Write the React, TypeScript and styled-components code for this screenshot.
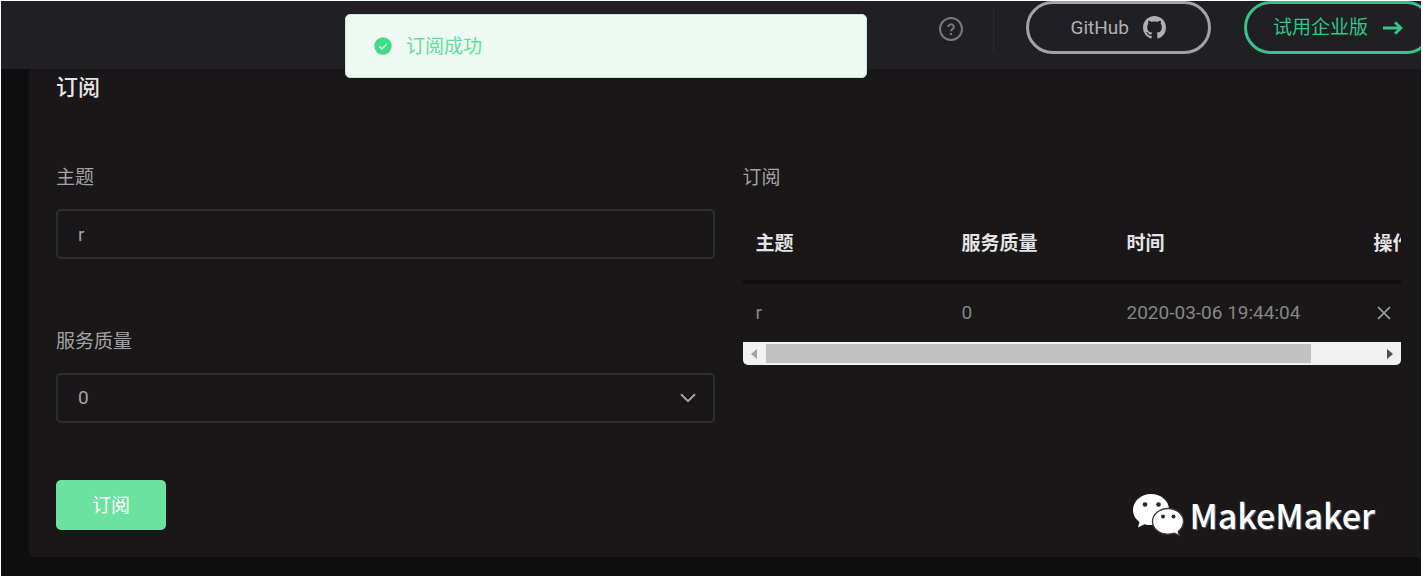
import React from "react";
import styled, { createGlobalStyle } from "styled-components";

const colors = {
  page: "#0e0e0e",
  header: "#201f24",
  card: "#1a1718",
  border: "#2e2c33",
  text: "#a2a2a5",
  muted: "#868587",
  strong: "#e4e4e6",
  green: "#34c388",
};

const GlobalStyle = createGlobalStyle`
  *, *::before, *::after { box-sizing: border-box; }
  html { background: #fff; }
  body {
    margin: 0;
    background: #fff;
    font-family: Roboto, "Noto Sans CJK SC", sans-serif;
    font-size: 19px;
    line-height: 28px;
    color: ${colors.text};
  }
  button, input, select { font: inherit; color: inherit; }
`;

const Page = styled.div`
  position: relative;
  margin: 1px 2px 1px 1px;
  padding-bottom: 19px;
  background: ${colors.page};
  overflow: hidden;
`;

const Header = styled.header`
  display: flex;
  justify-content: flex-end;
  align-items: flex-start;
  height: 68px;
  background: ${colors.header};
`;

const HelpButton = styled.button`
  display: flex;
  margin: 15px 29px 0 0;
  padding: 0;
  border: 0;
  background: none;
  color: #77777f;
`;

const Divider = styled.div`
  width: 1px;
  height: 46px;
  margin: 6px 32px 0 0;
  background: #2b2a30;
`;

const PillLink = styled.a<{ $tone: string; $line: string; $inset: number }>`
  display: flex;
  align-items: center;
  justify-content: center;
  gap: 14px;
  height: 53px;
  padding: 0 ${(p) => p.$inset}px;
  border: 3px solid ${(p) => p.$line};
  border-radius: 27px;
  color: ${(p) => p.$tone};
  text-decoration: none;
  white-space: nowrap;

  & + & {
    margin: 0 -12px 0 33px;
  }
`;

const Card = styled.main`
  margin-left: 28px;
  padding: 3px 20px 27px 27px;
  background: ${colors.card};
  border-bottom-left-radius: 5px;
`;

const Title = styled.h2`
  margin: 0 0 59px;
  font-size: 22px;
  line-height: 32px;
  font-weight: 500;
  color: ${colors.strong};
`;

const Columns = styled.div`
  display: grid;
  grid-template-columns: minmax(0, 1fr) minmax(0, 1fr);
  gap: 28px;
`;

const Form = styled.form`
  display: flex;
  flex-direction: column;
  align-items: flex-start;
`;

const Field = styled.div`
  width: 100%;
  margin-bottom: 68px;

  & + & {
    margin-bottom: 57px;
  }
`;

const Label = styled.label`
  display: block;
  margin-bottom: 16px;
  line-height: 30px;
`;

const TextInput = styled.input`
  display: block;
  width: 100%;
  height: 50px;
  padding: 0 20px;
  border: 2px solid ${colors.border};
  border-radius: 5px;
  background: transparent;
  outline: none;
`;

const SelectBox = styled.div`
  display: grid;
  align-items: center;

  & > * {
    grid-area: 1 / 1;
  }

  & > svg {
    justify-self: end;
    margin-right: 19px;
    pointer-events: none;
  }
`;

const Select = styled.select`
  width: 100%;
  height: 50px;
  padding: 0 20px;
  border: 2px solid ${colors.border};
  border-radius: 5px;
  background: ${colors.card};
  appearance: none;
  outline: none;
`;

const Submit = styled.button`
  width: 110px;
  height: 50px;
  padding: 2px 0 0;
  border: 0;
  border-radius: 5px;
  background: #6ae3a1;
  color: #fff;
`;

const SectionLabel = styled.h3`
  margin: 0 0 13px;
  font: inherit;
  line-height: 30px;
`;

const TableFrame = styled.div`
  overflow: hidden;
  border-radius: 0 0 5px 5px;
`;

const Table = styled.table`
  width: 742px;
  table-layout: fixed;
  border-collapse: separate;
  border-spacing: 0;
  text-align: left;
  white-space: nowrap;
`;

const Col = styled.col<{ $width: number }>`
  width: ${(p) => p.$width}px;
`;

const HeadCell = styled.th`
  height: 78px;
  padding: 2px 13px 0;
  border-bottom: 4px solid #0f0f0f;
  font-weight: 700;
  color: ${colors.strong};
`;

const Cell = styled.td`
  height: 58px;
  padding: 0 13px;
  color: ${colors.muted};
`;

const IconButton = styled.button`
  display: flex;
  padding: 0;
  border: 0;
  background: none;
  color: #a2a2a5;
`;

const ScrollBar = styled.div`
  display: flex;
  align-items: center;
  height: 23px;
  padding: 2px 0;
  background: #f1f1f1;
`;

const ScrollArrow = styled.button`
  display: flex;
  justify-content: center;
  align-items: center;
  width: 23px;
  height: 19px;
  padding: 0;
  border: 0;
  background: none;
`;

const Track = styled.div`
  flex: 1;
  height: 100%;
`;

const Thumb = styled.div`
  width: 89%;
  height: 100%;
  background: #c1c1c1;
`;

const Toast = styled.div`
  position: absolute;
  top: 13px;
  left: 344px;
  display: flex;
  align-items: center;
  gap: 14px;
  width: 522px;
  height: 64px;
  padding: 0 28px;
  border: 1px solid #c4e8d5;
  border-radius: 5px;
  background: #edf9f2;
  color: #5fe09a;
`;

const ToastText = styled.span`
  padding-top: 2px;
`;

const Watermark = styled.div`
  position: absolute;
  right: 46px;
  bottom: 38px;
  display: flex;
  align-items: center;
  gap: 6px;
  font-family: "Noto Sans CJK SC", sans-serif;
  font-size: 34px;
  line-height: 46px;
  font-weight: 500;
  color: #fff;
  text-shadow: 1px 1px 1px #777;
`;

const HelpIcon = () => (
  <svg width="26" height="26" viewBox="0 0 26 26" fill="none" stroke="currentColor" strokeWidth="2">
    <circle cx="13" cy="13" r="11" />
    <path d="M10.2 11a2.8 2.6 0 1 1 4.4 2.1c-1 .7-1.6 1.1-1.6 2.2" />
    <path d="M13 17v2" />
  </svg>
);

const GitHubIcon = () => (
  <svg width="23" height="23" viewBox="0 0 16 16" fill="currentColor">
    <path d="M8 0C3.58 0 0 3.58 0 8c0 3.54 2.29 6.53 5.47 7.59.4.07.55-.17.55-.38 0-.19-.01-.82-.01-1.49-2.01.37-2.53-.49-2.69-.94-.09-.23-.48-.94-.82-1.13-.28-.15-.68-.52-.01-.53.63-.01 1.08.58 1.23.82.72 1.21 1.87.87 2.33.66.07-.52.28-.87.51-1.07-1.78-.2-3.64-.89-3.64-3.95 0-.87.31-1.59.82-2.15-.08-.2-.36-1.02.08-2.12 0 0 .67-.21 2.2.82.64-.18 1.32-.27 2-.27s1.36.09 2 .27c1.53-1.04 2.2-.82 2.2-.82.44 1.1.16 1.92.08 2.12.51.56.82 1.27.82 2.15 0 3.07-1.87 3.75-3.65 3.95.29.25.54.73.54 1.48 0 1.07-.01 1.93-.01 2.2 0 .21.15.46.55.38A8.01 8.01 0 0 0 16 8c0-4.420-3.580-8-8-8Z" />
  </svg>
);

const ArrowIcon = () => (
  <svg width="22" height="16" viewBox="0 0 22 16" fill="none" stroke="currentColor" strokeWidth="2.8">
    <path d="M1 8h18M13 2.2 19 8l-6 5.800" />
  </svg>
);

const CheckIcon = () => (
  <svg width="18" height="18" viewBox="0 0 18 18">
    <circle cx="9" cy="9" r="8.7" fill="#3fdc83" />
    <path d="m5.2 9.3 2.7 2.5 5-5" fill="none" stroke="#c5f5da" strokeWidth="1.6" />
  </svg>
);

const ChevronIcon = () => (
  <svg width="16" height="10" viewBox="0 0 16 10" fill="none" stroke="#a2a2a5" strokeWidth="2">
    <path d="m1 1.2 7 7 7-7" />
  </svg>
);

const CloseIcon = () => (
  <svg width="20" height="14" viewBox="0 0 20 14" fill="none" stroke="currentColor" strokeWidth="1.7">
    <path d="m4 1 12 12M16 1 4 13" />
  </svg>
);

const WeChatIcon = () => (
  <svg width="52" height="44" viewBox="0 0 52 44">
    <path
      d="M19 1C9 1 1 8 1 17c0 5 2.500 9 6.500 12L6 34.500l6.500-3.300c2 .6 4.300 .9 6.500.9 10 0 18-6.600 18-15.600S29 1 19 1Z"
      fill="#fff"
    />
    <path
      d="M36 15.500c8.500 0 15.500 5.800 15.500 13 0 4.200-2.200 7.500-5.300 9.900l1.300 4.300-5-2.600c-2 .7-4.200 1.100-6.500 1.100-8.600 0-15.500-5.500-15.500-12.700s7-13 15.500-13Z"
      fill="#fff"
      stroke="#3a3839"
      strokeWidth="1.3"
    />
    <g fill="#2a2829">
      <circle cx="13" cy="11.500" r="2.300" />
      <circle cx="26.500" cy="11.500" r="2.300" />
      <circle cx="31" cy="23.500" r="2" />
      <circle cx="41.500" cy="23.500" r="2" />
    </g>
  </svg>
);

export default function App() {
  return (
    <>
      <GlobalStyle />
      <Page>
        <Header>
          <HelpButton type="button" aria-label="帮助">
            <HelpIcon />
          </HelpButton>
          <Divider />
          <PillLink href="#github" $tone="#b0b0b4" $line="#a3a3a7" $inset={42}>
            GitHub
            <GitHubIcon />
          </PillLink>
          <PillLink href="#enterprise" $tone={colors.green} $line={colors.green} $inset={26}>
            试用企业版
            <ArrowIcon />
          </PillLink>
        </Header>
        <Card>
          <Title>订阅</Title>
          <Columns>
            <Form onSubmit={(e) => e.preventDefault()}>
              <Field>
                <Label htmlFor="topic">主题</Label>
                <TextInput id="topic" defaultValue="r" />
              </Field>
              <Field>
                <Label htmlFor="qos">服务质量</Label>
                <SelectBox>
                  <Select id="qos" defaultValue="0">
                    <option>0</option>
                    <option>1</option>
                    <option>2</option>
                  </Select>
                  <ChevronIcon />
                </SelectBox>
              </Field>
              <Submit type="submit">订阅</Submit>
            </Form>
            <section>
              <SectionLabel>订阅</SectionLabel>
              <TableFrame>
                <Table>
                  <colgroup>
                    <Col $width={206} />
                    <Col $width={165} />
                    <Col $width={247} />
                    <Col $width={124} />
                  </colgroup>
                  <thead>
                    <tr>
                      <HeadCell>主题</HeadCell>
                      <HeadCell>服务质量</HeadCell>
                      <HeadCell>时间</HeadCell>
                      <HeadCell>操作</HeadCell>
                    </tr>
                  </thead>
                  <tbody>
                    <tr>
                      <Cell>r</Cell>
                      <Cell>0</Cell>
                      <Cell>2020-03-06 19:44:04</Cell>
                      <Cell>
                        <IconButton type="button" aria-label="取消订阅">
                          <CloseIcon />
                        </IconButton>
                      </Cell>
                    </tr>
                  </tbody>
                </Table>
                <ScrollBar>
                  <ScrollArrow type="button" aria-label="向左滚动">
                    <svg width="6" height="10" viewBox="0 0 6 10">
                      <path d="M6 0v10L0 5Z" fill="#a3a3a3" />
                    </svg>
                  </ScrollArrow>
                  <Track>
                    <Thumb />
                  </Track>
                  <ScrollArrow type="button" aria-label="向右滚动">
                    <svg width="6" height="10" viewBox="0 0 6 10">
                      <path d="M0 0v10l6-5Z" fill="#505050" />
                    </svg>
                  </ScrollArrow>
                </ScrollBar>
              </TableFrame>
            </section>
          </Columns>
        </Card>
        <Toast role="status">
          <CheckIcon />
          <ToastText>订阅成功</ToastText>
        </Toast>
        <Watermark>
          <WeChatIcon />
          MakeMaker
        </Watermark>
      </Page>
    </>
  );
}
